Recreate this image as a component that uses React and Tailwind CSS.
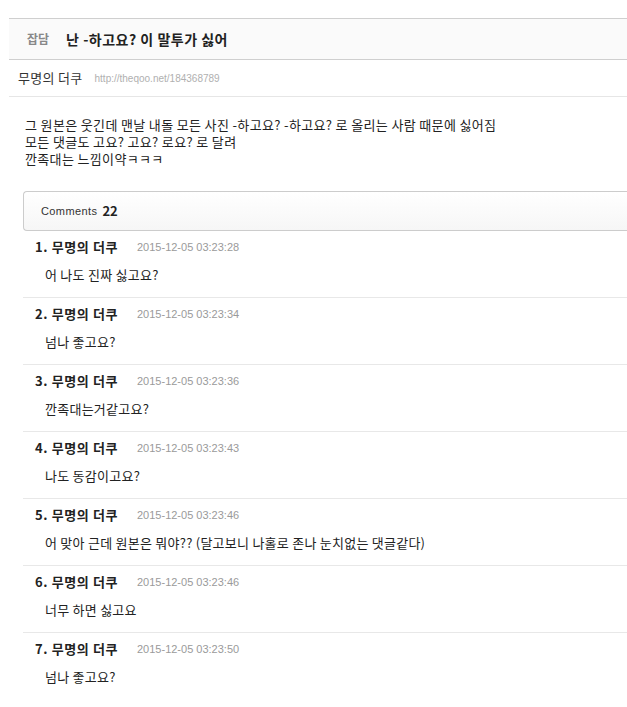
import React from 'react';

const comments = [
  { time: '2015-12-05 03:23:28', text: '어 나도 진짜 싫고요?' },
  { time: '2015-12-05 03:23:34', text: '넘나 좋고요?' },
  { time: '2015-12-05 03:23:36', text: '깐족대는거같고요?' },
  { time: '2015-12-05 03:23:43', text: '나도 동감이고요?' },
  { time: '2015-12-05 03:23:46', text: '어 맞아 근데 원본은 뭐야?? (달고보니 나홀로 존나 눈치없는 댓글같다)' },
  { time: '2015-12-05 03:23:46', text: '너무 하면 싫고요' },
  { time: '2015-12-05 03:23:50', text: '넘나 좋고요?' },
];

const font = 'font-["Noto_Sans_CJK_KR","Liberation_Sans",sans-serif]';

const CommentRow = ({ n, time, text }) => (
  <div className="pl-[12px] pt-[8px] pb-[12px] border-b border-[#e8e8e8] last:border-b-0">
    <div className="flex items-center h-[16px] leading-[16px]">
      <span className="text-[13px] font-bold text-[#222] tracking-[0.6px] w-[102px]">{n}. 무명의 더쿠</span>
      <span className='text-[11px] text-[#9a9a9a] font-["Liberation_Sans",sans-serif]'>{time}</span>
    </div>
    <div className="mt-[10px] h-[20px] leading-[20px] pl-[10px] text-[13px] tracking-[0.25px] text-[#222]">{text}</div>
  </div>
);

export default function App() {
  return (
    <div className={`${font} bg-white w-[627px] h-[707px] overflow-hidden pt-[18px]`}>
      <div className="ml-[9px]">
        <div className="h-[42px] bg-[#fafafa] border-y border-[#cfcfcf] flex items-center">
          <span className="ml-[18px] text-[12px] font-bold text-[#888]">잡담</span>
          <span className="ml-[17px] text-[14px] font-bold tracking-[0.5px] text-[#222]">난 -하고요? 이 말투가 싫어</span>
        </div>
        <div className="h-[37px] border-b border-[#e6e6e6] flex items-center">
          <span className="ml-[9px] text-[13px] tracking-[0.3px] text-[#333]">무명의 더쿠</span>
          <span className='ml-[12px] text-[10px] text-[#b0b0b0] font-["Liberation_Sans",sans-serif]'>http://theqoo.net/184368789</span>
        </div>
        <div className="pl-[16px] pt-[19px] text-[13px] leading-[17px] tracking-[0.35px] text-[#222]">
          <p>그 원본은 웃긴데 맨날 내돌 모든 사진 -하고요? -하고요? 로 올리는 사람 때문에 싫어짐</p>
          <p>모든 댓글도 고요? 고요? 로요? 로 달려</p>
          <p>깐족대는 느낌이약ㅋㅋㅋ</p>
        </div>
        <div className="ml-[14px] mt-[24px]">
          <div className="h-[40px] rounded-l-[4px] border border-r-0 border-[#cccccc] bg-gradient-to-b from-white to-[#f6f6f6] flex items-center pl-[17px]">
            <span className='text-[11px] text-[#333] font-["Liberation_Sans",sans-serif] tracking-[0.4px]'>Comments</span>
            <span className="ml-[5px] text-[13px] font-bold text-[#222]">22</span>
          </div>
          {comments.map((c, i) => (
            <CommentRow key={i} n={i + 1} time={c.time} text={c.text} />
          ))}
        </div>
      </div>
    </div>
  );
}
